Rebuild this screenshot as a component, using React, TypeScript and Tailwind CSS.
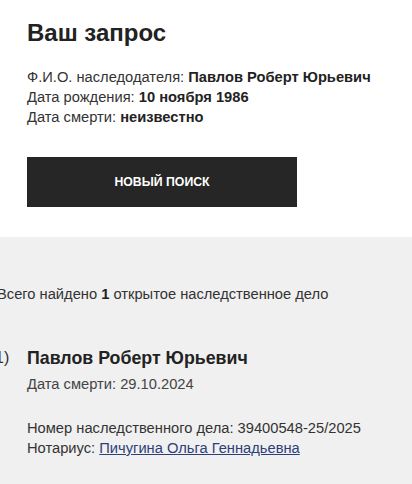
export default function App() {
  return (
    <div className="min-h-[484px] w-[412px] overflow-hidden bg-white font-['Liberation_Sans',Arial,sans-serif] text-[#222]">
      {/* Request summary */}
      <section className="px-[27px] pb-[30px] pt-[18px]">
        <h1 className="text-[24px] font-bold leading-[30px] text-[#222]">Ваш запрос</h1>
        <div className="mt-[19px] text-[14.7px] leading-[20px] text-[#333]">
          <p>
            Ф.И.О. наследодателя: <b className="text-[#222]">Павлов Роберт Юрьевич</b>
          </p>
          <p>
            Дата рождения: <b className="text-[#222]">10 ноября 1986</b>
          </p>
          <p>
            Дата смерти: <b className="text-[#222]">неизвестно</b>
          </p>
        </div>
        <button className="mt-[30px] flex h-[50px] w-[270px] items-center justify-center bg-[#262626] text-[12.3px] font-bold uppercase text-white">
          Новый поиск
        </button>
      </section>

      {/* Results */}
      <section className="h-[247px] bg-[#f0f0f0] pt-[47px]">
        <p className="-ml-[3px] text-[14.7px] leading-[20px] text-[#333]">
          Всего найдено <b className="text-[#222]">1</b> открытое наследственное дело
        </p>
        <div className="mt-[42px] flex">
          <span className="-ml-[5px] w-[32px] text-[16px] leading-[24px] text-[#333]">1)</span>
          <div>
            <h2 className="text-[17.8px] font-bold leading-[24px] text-[#222]">Павлов Роберт Юрьевич</h2>
            <p className="mt-[4px] text-[14.7px] leading-[20px] text-[#444]">Дата смерти: 29.10.2024</p>
            <div className="mt-[24px] text-[14.7px] leading-[20px] text-[#333]">
              <p>Номер наследственного дела: 39400548-25/2025</p>
              <p>
                Нотариус:{" "}
                <a href="#" className="text-[#2c3f78] underline">
                  Пичугина Ольга Геннадьевна
                </a>
              </p>
            </div>
          </div>
        </div>
      </section>
    </div>
  );
}
